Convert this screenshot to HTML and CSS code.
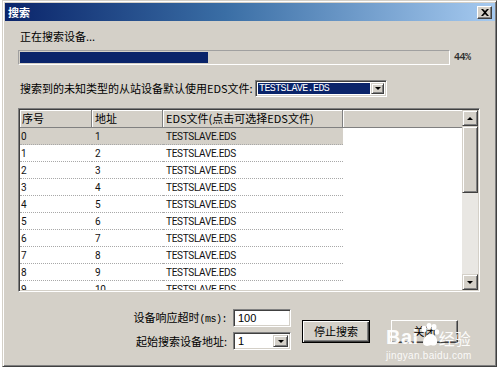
FILE: index.html
```html
<!DOCTYPE html>
<html>
<head>
<meta charset="utf-8">
<link rel="stylesheet" href="styles.css">
</head>
<body>
<div class="window">
  <div class="titlebar">
    <span class="title">搜索</span>
    <span class="close-btn"><svg width="8" height="7" viewBox="0 0 8 7"><path d="M0 0h2l2 2 2-2h2L5 3.5 8 7H6L4 5 2 7H0l3-3.5z" fill="#000"/></svg></span>
  </div>
  <div class="content">
    <div class="status">正在搜索设备...</div>
    <div class="progress-row">
      <div class="progress"><div class="progress-fill" style="width:44%"></div></div>
      <span class="pct">44%</span>
    </div>
    <div class="eds-row">
      <span class="eds-label">搜索到的未知类型的从站设备默认使用EDS文件:</span>
      <div class="combo combo-eds">
        <span class="combo-value selected">TESTSLAVE.EDS</span>
        <span class="combo-btn"><span class="arrow-down"></span></span>
      </div>
    </div>
    <div class="listview">
      <div class="list-main">
        <div class="list-header">
          <div class="hcell c1">序号</div>
          <div class="hcell c2">地址</div>
          <div class="hcell c3">EDS文件(点击可选择EDS文件)</div>
          <div class="hcell hfill"></div>
        </div>
        <div class="list-rows">
          <div class="row sel"><div class="cell c1">0</div><div class="cell c2">1</div><div class="cell c3">TESTSLAVE.EDS</div></div>
          <div class="row"><div class="cell c1">1</div><div class="cell c2">2</div><div class="cell c3">TESTSLAVE.EDS</div></div>
          <div class="row"><div class="cell c1">2</div><div class="cell c2">3</div><div class="cell c3">TESTSLAVE.EDS</div></div>
          <div class="row"><div class="cell c1">3</div><div class="cell c2">4</div><div class="cell c3">TESTSLAVE.EDS</div></div>
          <div class="row"><div class="cell c1">4</div><div class="cell c2">5</div><div class="cell c3">TESTSLAVE.EDS</div></div>
          <div class="row"><div class="cell c1">5</div><div class="cell c2">6</div><div class="cell c3">TESTSLAVE.EDS</div></div>
          <div class="row"><div class="cell c1">6</div><div class="cell c2">7</div><div class="cell c3">TESTSLAVE.EDS</div></div>
          <div class="row"><div class="cell c1">7</div><div class="cell c2">8</div><div class="cell c3">TESTSLAVE.EDS</div></div>
          <div class="row"><div class="cell c1">8</div><div class="cell c2">9</div><div class="cell c3">TESTSLAVE.EDS</div></div>
          <div class="row"><div class="cell c1">9</div><div class="cell c2">10</div><div class="cell c3">TESTSLAVE.EDS</div></div>
        </div>
      </div>
      <div class="scrollbar">
        <div class="sb-btn"><span class="arrow-up"></span></div>
        <div class="sb-thumb"></div>
        <div class="sb-track"></div>
        <div class="sb-btn"><span class="arrow-down"></span></div>
      </div>
    </div>
    <div class="bottom">
      <div class="form-grid">
        <span class="flabel">设备响应超时<span class="mono">(ms):</span></span>
        <div class="textbox">100</div>
        <span class="flabel">起始搜索设备地址:</span>
        <div class="combo combo-small">
          <span class="combo-value">1</span>
          <span class="combo-btn"><span class="arrow-down"></span></span>
        </div>
      </div>
      <div class="button default">停止搜索</div>
      <div class="button close">关闭</div>
    </div>
  </div>
  <div class="watermark">
    <div class="wm-top">
      <span class="wm-bai">Bai</span>
      <svg class="wm-paw" width="20" height="24" viewBox="0 0 20 24">
        <ellipse cx="4" cy="6" rx="2.5" ry="3.2" fill="#fff"/>
        <ellipse cx="9" cy="3" rx="2.5" ry="3" fill="#fff"/>
        <ellipse cx="14" cy="4" rx="2.5" ry="3" fill="#fff"/>
        <ellipse cx="17" cy="9" rx="2.2" ry="2.8" fill="#fff"/>
        <path d="M3 20c0-5 4-9 8-9s7 5 6 9c-1 3-4 3-6 2-2 1-7 2-8-2z" fill="#fff"/>
      </svg>
      <span class="wm-jy">经验</span>
    </div>
    <div class="wm-url">jingyan.baidu.com</div>
  </div>
</div>
</body>
</html>
```
FILE: styles.css
```css
* { box-sizing: border-box; }
html, body {
  margin: 0;
  padding: 0;
  background: #ffffff;
  width: 500px;
  height: 372px;
  overflow: hidden;
}
body {
  font-family: "Noto Sans CJK SC", "Noto Sans", sans-serif;
  font-size: 11px;
  line-height: 13px;
  color: #000;
}
.window {
  position: relative;
  margin-left: 2px;
  width: 495px;
  height: 367px;
  background: #d4d0c8;
  border: 1px solid;
  border-color: #d4d0c8 #404040 #404040 #d4d0c8;
  box-shadow: inset 1px 1px #ffffff, inset -1px -1px #808080;
  padding: 2px 1px 1px 2px;
}
.titlebar {
  height: 18px;
  background: linear-gradient(to right, #0a246a 0%, #3a6ea5 45%, #a6caf0 100%);
  display: flex;
  align-items: center;
  justify-content: space-between;
  padding: 0 3px 0 3px;
}
.title {
  color: #fff;
  font-weight: bold;
  font-size: 11px;
}
.close-btn {
  width: 15px;
  height: 13px;
  background: #d4d0c8;
  border: 1px solid;
  border-color: #fff #404040 #404040 #fff;
  box-shadow: inset -1px -1px #808080;
  display: flex;
  align-items: center;
  justify-content: center;
}
.content {
  padding: 9px 0 0 13px;
}
.status {
  margin-left: 2px;
  height: 13px;
}
.progress-row {
  margin-top: 7px;
  display: flex;
  align-items: center;
  height: 15px;
}
.progress {
  width: 432px;
  height: 15px;
  border: 1px solid;
  border-color: #a0a0a0 #fff #fff #a0a0a0;
  padding: 1px;
}
.progress-fill {
  height: 100%;
  background: #0a246a;
}
.pct {
  margin-left: 4px;
  font-family: "Liberation Mono", monospace;
  font-size: 10px;
  font-weight: bold;
  letter-spacing: -0.5px;
  color: #303030;
}
.mono {
  font-family: "Liberation Mono", monospace;
  font-size: 10px;
  letter-spacing: -0.5px;
}
.eds-row {
  margin-top: 15px;
  display: flex;
  align-items: center;
  height: 17px;
}
.eds-label {
  width: 237px;
  padding-left: 2px;
  white-space: nowrap;
}
.combo {
  display: flex;
  background: #fff;
  border: 1px solid;
  border-color: #808080 #fff #fff #808080;
  box-shadow: inset 1px 1px #404040, inset -1px -1px #d4d0c8;
  padding: 2px;
}
.combo-eds {
  width: 132px;
  height: 17px;
}
.combo-value {
  flex: 1;
  display: flex;
  align-items: center;
  padding-left: 2px;
  font-size: 11px;
  font-family: "Liberation Sans", sans-serif;
}
.combo-value.selected {
  background: #0a246a;
  color: #fff;
  font-family: "Liberation Mono", monospace;
  font-size: 10px;
  letter-spacing: -0.6px;
  padding-left: 1px;
}
.combo-btn {
  width: 13px;
  margin-left: 1px;
  background: #d4d0c8;
  border: 1px solid;
  border-color: #d4d0c8 #404040 #404040 #d4d0c8;
  box-shadow: inset 1px 1px #fff, inset -1px -1px #808080;
  display: flex;
  align-items: center;
  justify-content: center;
}
.arrow-down {
  width: 0;
  height: 0;
  border-left: 3px solid transparent;
  border-right: 3px solid transparent;
  border-top: 3px solid #000;
}
.arrow-up {
  width: 0;
  height: 0;
  border-left: 3px solid transparent;
  border-right: 3px solid transparent;
  border-bottom: 3px solid #000;
}
.listview {
  margin-top: 11px;
  width: 462px;
  height: 184px;
  display: flex;
  border: 1px solid;
  border-color: #808080 #fff #fff #808080;
  box-shadow: inset 1px 1px #404040, inset -1px -1px #d4d0c8;
  padding: 1px;
  background: #fff;
}
.list-main {
  width: 442px;
  overflow: hidden;
}
.list-header {
  display: flex;
  height: 18px;
  background: #d4d0c8;
}
.hcell {
  height: 18px;
  display: flex;
  align-items: center;
  padding-left: 3px;
  border-right: 1px solid #808080;
  border-bottom: 1px solid #808080;
  box-shadow: inset 1px 1px #fff;
  white-space: nowrap;
}
.hcell.c1 { padding-left: 2px; }
.hfill { flex: 1; border-right: none; }
.c1 { width: 72px; }
.c2 { width: 71px; }
.c3 { width: 180px; }
.list-rows {
  height: 162px;
  overflow: hidden;
}
.row {
  display: flex;
  height: 17px;
}
.cell {
  height: 17px;
  display: flex;
  align-items: center;
  padding-left: 3px;
  border-bottom: 1px dotted #a8a8a8;
  font-family: Roboto, "Liberation Sans", sans-serif;
  font-size: 10px;
  letter-spacing: -0.3px;
  color: #111;
}
.cell.c1 { padding-left: 1px; }
.row.sel .cell { background: #d4d0c8; }
.scrollbar {
  width: 16px;
  display: flex;
  flex-direction: column;
}
.sb-btn, .sb-thumb {
  background: #d4d0c8;
  border: 1px solid;
  border-color: #d4d0c8 #404040 #404040 #d4d0c8;
  box-shadow: inset 1px 1px #fff, inset -1px -1px #808080;
}
.sb-btn {
  height: 16px;
  display: flex;
  align-items: center;
  justify-content: center;
}
.sb-thumb { height: 67px; }
.sb-track {
  flex: 1;
  background: #e9e7e3;
}
.bottom {
  margin-top: 17px;
  display: flex;
  align-items: center;
  padding-left: 110px;
}
.form-grid {
  display: grid;
  grid-template-columns: 100px 58px;
  grid-auto-rows: 18px;
  column-gap: 5px;
  row-gap: 5px;
  align-items: center;
}
.flabel {
  text-align: right;
  white-space: nowrap;
  padding-right: 1px;
}
.textbox {
  height: 18px;
  background: #fff;
  border: 1px solid;
  border-color: #808080 #fff #fff #808080;
  box-shadow: inset 1px 1px #404040, inset -1px -1px #d4d0c8;
  padding: 2px 0 0 4px;
  font-family: "Liberation Sans", sans-serif;
  font-size: 11px;
}
.combo-small {
  height: 18px;
}
.combo-small .combo-btn { width: 15px; }
.button {
  margin-top: 4px;
  height: 23px;
  display: flex;
  align-items: center;
  justify-content: center;
  background: #d4d0c8;
}
.button.default {
  margin-left: 11px;
  width: 68px;
  border: 1px solid #000;
  box-shadow: inset 1px 1px #fff, inset -1px -1px #404040, inset -2px -2px #808080;
}
.button.close {
  margin-left: 21px;
  width: 67px;
  border: 1px solid;
  border-color: #fff #404040 #404040 #fff;
  box-shadow: inset -1px -1px #808080;
}
.watermark {
  position: absolute;
  left: 383px;
  top: 313px;
  color: rgba(255, 255, 255, 0.95);
  pointer-events: none;
}
.wm-top {
  display: flex;
  align-items: flex-end;
  height: 33px;
}
.wm-bai {
  font-family: "Liberation Sans", sans-serif;
  font-weight: bold;
  font-size: 20px;
  line-height: 20px;
  letter-spacing: 0.5px;
}
.wm-paw {
  margin: 0 -1px 0 1px;
}
.wm-jy {
  font-size: 16px;
  line-height: 18px;
}
.wm-url {
  margin-top: 3px;
  font-family: "Liberation Sans", sans-serif;
  font-size: 10px;
  line-height: 11px;
  letter-spacing: 0.3px;
  color: rgba(255, 255, 255, 0.9);
}
```
